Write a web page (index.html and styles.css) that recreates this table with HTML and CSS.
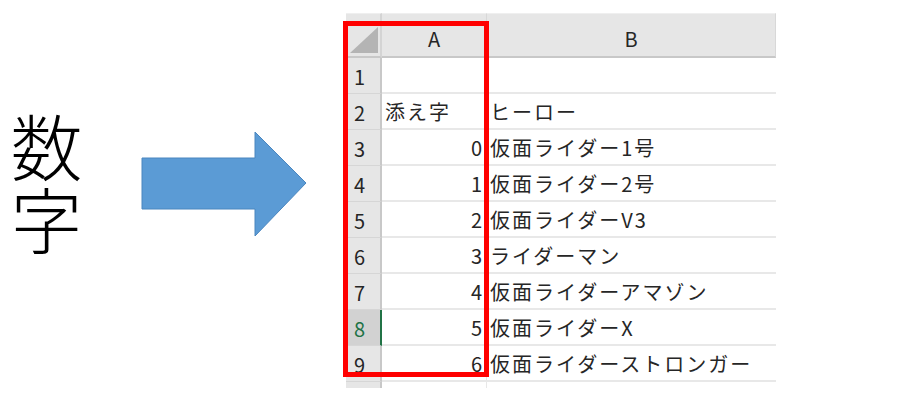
FILE: index.html
```html
<!DOCTYPE html>
<html lang="ja">
<head>
<meta charset="utf-8">
<link rel="stylesheet" href="styles.css">
</head>
<body>
<div class="page">
  <div class="title">数字</div>
  <svg class="arrow" width="168" height="108" viewBox="0 0 168 108">
    <polygon points="1,27 114,27 114,1 165,52 114,105 114,78 1,78" fill="#5b9bd5" stroke="#4a86bf" stroke-width="1"/>
  </svg>
  <div class="sheet">
    <div class="grid">
      <div class="corner"><div class="tri"></div></div>
      <div class="colhead">A</div>
      <div class="colhead">B</div>

      <div class="rowhead">1</div><div class="cell"></div><div class="cell"></div>
      <div class="rowhead">2</div><div class="cell">添え字</div><div class="cell">ヒーロー</div>
      <div class="rowhead">3</div><div class="cell num">0</div><div class="cell">仮面ライダー1号</div>
      <div class="rowhead">4</div><div class="cell num">1</div><div class="cell">仮面ライダー2号</div>
      <div class="rowhead">5</div><div class="cell num">2</div><div class="cell">仮面ライダーV3</div>
      <div class="rowhead">6</div><div class="cell num">3</div><div class="cell">ライダーマン</div>
      <div class="rowhead">7</div><div class="cell num">4</div><div class="cell">仮面ライダーアマゾン</div>
      <div class="rowhead active">8</div><div class="cell num">5</div><div class="cell">仮面ライダーX</div>
      <div class="rowhead">9</div><div class="cell num">6</div><div class="cell">仮面ライダーストロンガー</div>
      <div class="rowhead stub"></div><div class="cell stub"></div><div class="cell stub"></div>
    </div>
    <div class="highlight"></div>
  </div>
</div>
</body>
</html>
```

FILE: styles.css
```css
html, body {
  margin: 0;
  padding: 0;
  background: #ffffff;
}
body {
  width: 899px;
  height: 399px;
  overflow: hidden;
  font-family: "Noto Sans CJK JP", "Noto Sans", sans-serif;
}
.page {
  display: flex;
  align-items: flex-start;
}
.title {
  writing-mode: vertical-rl;
  margin-left: 0;
  margin-top: 112px;
  font-size: 72px;
  line-height: 92px;
  letter-spacing: 1px;
  font-weight: 300;
  color: #000;
}
.arrow {
  display: block;
  margin-left: 49px;
  margin-top: 131px;
}
.sheet {
  position: relative;
  margin-left: 37px;
  margin-top: 13px;
}
.grid {
  display: grid;
  grid-template-columns: 36px 105px 289px;
  grid-template-rows: 45px repeat(9, 36px) 6px;
  color: #262626;
  font-size: 20px;
}
.corner {
  background: #e6e6e6;
  border-right: 2px solid #d4d4d4;
  border-bottom: 2px solid #c8c8c8;
  border-top: 1px solid #efefef;
  position: relative;
}
.tri {
  position: absolute;
  right: 2px;
  bottom: 3px;
  width: 0;
  height: 0;
  border-left: 28px solid transparent;
  border-bottom: 26px solid #b4b4b4;
}
.colhead {
  background: #e6e6e6;
  border-top: 1px solid #efefef;
  border-right: 1px solid #d8d8d8;
  border-bottom: 2px solid #c8c8c8;
  display: flex;
  align-items: center;
  justify-content: center;
  padding-top: 6px;
  font-size: 20px;
  color: #262626;
}
.rowhead {
  background: #e6e6e6;
  border-right: 2px solid #c8c8c8;
  border-bottom: 1px solid #d6d6d6;
  display: flex;
  align-items: center;
  padding-left: 8px;
  padding-top: 1px;
}
.rowhead.active {
  background: #d2d2d2;
  color: #217346;
  border-right: 2px solid #217346;
}
.cell {
  border-bottom: 2px solid #e8e8e8;
  display: flex;
  align-items: center;
  padding-left: 3px;
  padding-top: 1px;
  white-space: nowrap;
  letter-spacing: 2px;
}
.grid .cell:nth-child(3n+2) {
  border-right: 1px solid #e8e8e8;
}
.cell.num {
  justify-content: flex-end;
  padding-right: 2px;
}
.stub {
  border-bottom: none;
}
.highlight {
  position: absolute;
  left: -3px;
  top: 8px;
  width: 136px;
  height: 346px;
  border: 5px solid #ff0000;
}
```
